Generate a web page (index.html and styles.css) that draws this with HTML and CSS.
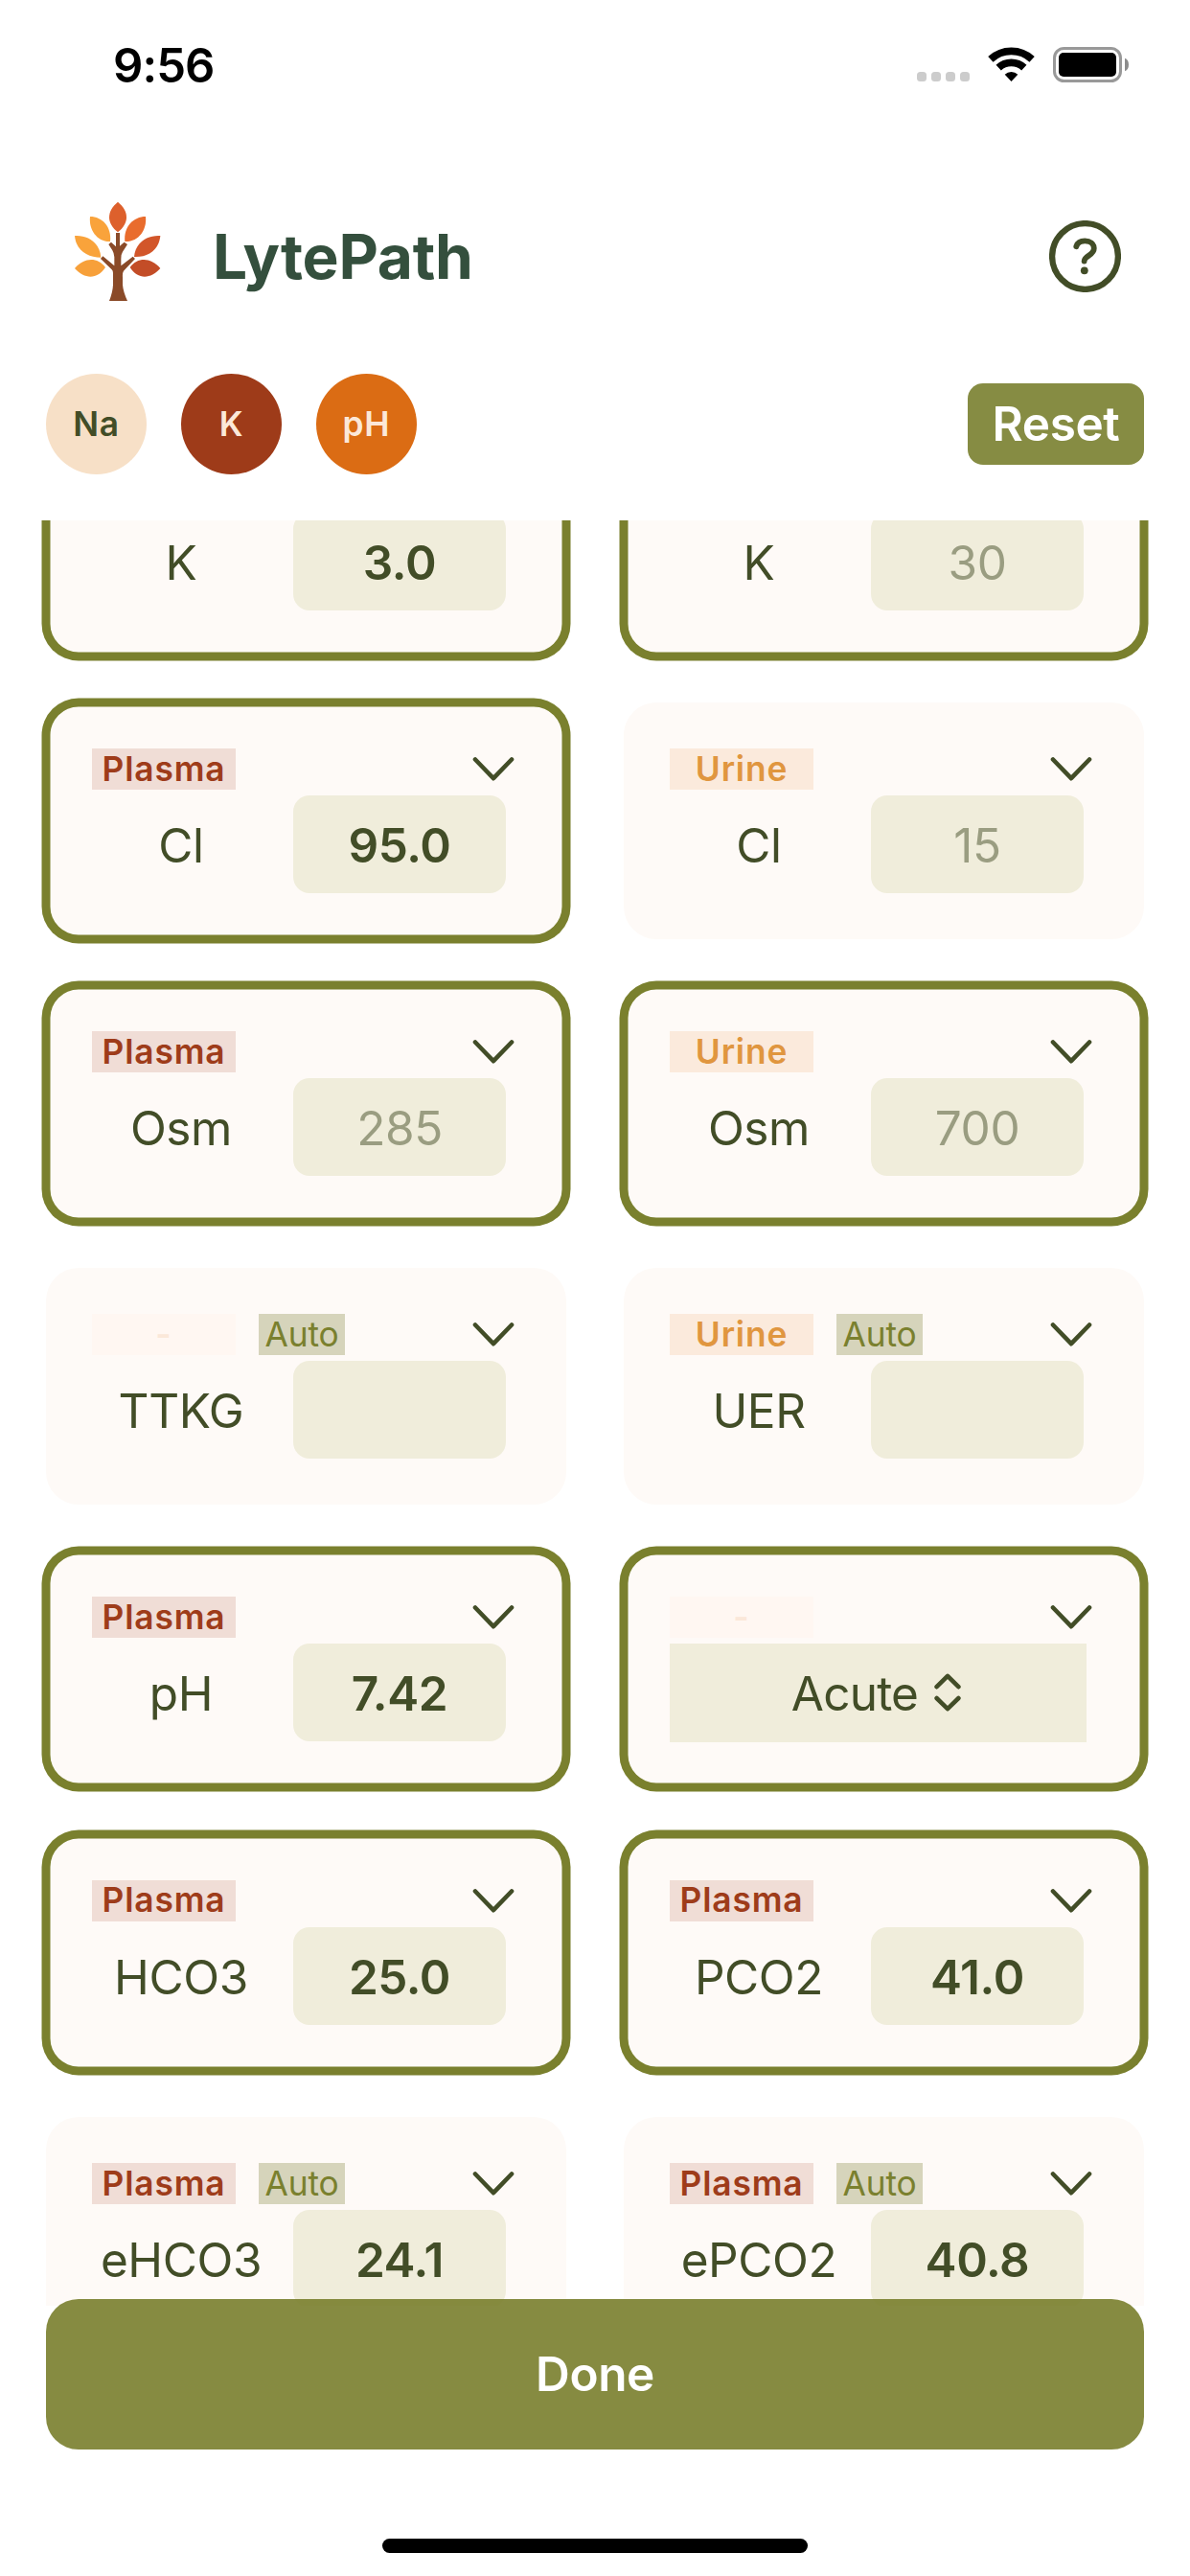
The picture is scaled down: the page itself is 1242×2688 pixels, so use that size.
FILE: index.html
```html
<!DOCTYPE html>
<html lang="en">
<head>
<meta charset="utf-8">
<title>LytePath</title>
<link rel="stylesheet" href="styles.css">
</head>
<body>
<svg class="defs" aria-hidden="true">
  <symbol id="chevron" viewBox="0 0 44 27"><path d="M3 3.5 22 23.2 41 3.5"/></symbol>
</svg>
<div class="screen">
  <div class="status">
    <span class="time">9:56</span>
    <div class="dots"><i></i><i></i><i></i><i></i></div>
    <svg class="wifi" viewBox="0 0 49 38">
      <path class="arc" d="M2.9 13.8A31.7 31.7 0 0 1 46.1 13.8M11.2 22.7A19.5 19.5 0 0 1 37.8 22.7"/>
      <path d="M24.5 37 17.7 29.7A10 10 0 0 1 31.3 29.7Z"/>
    </svg>
    <svg class="battery" viewBox="0 0 80 37">
      <rect class="shell" x="1.5" y="1.5" width="69" height="34" rx="10"/>
      <rect x="6" y="6" width="60" height="25" rx="5"/>
      <path class="nub" d="M75 11.7Q79 13.5 79 18.5T75 25.3Z"/>
    </svg>
  </div>

  <header class="header">
    <svg class="logo" viewBox="0 0 390 420">
      <path fill="#dd602c" d="M189 62C225 92 225 128 189 157C153 128 153 92 189 62Z"/>
      <path fill="#f9a33b" d="M102 108C140 108 170 140 165 186C125 188 97 150 102 108Z"/>
      <path fill="#e96c2d" d="M276 108C238 108 206 140 211 186C253 188 281 150 276 108Z"/>
      <path fill="#f9a33b" d="M54 168C95 165 133 190 136 236C95 236 58 215 54 168Z"/>
      <path fill="#d2562a" d="M322 168C281 165 243 190 240 234C283 236 318 213 322 168Z"/>
      <path fill="#f7a03a" d="M54 270C85 235 125 235 150 267C125 305 85 305 54 270Z"/>
      <path fill="#c34d27" d="M322 270C291 235 251 235 227 267C251 305 291 305 322 270Z"/>
      <path fill="#8a4a28" d="M183 159H195V200L209 188L219 195L204 218Q199 225 199 240V262L236 233L243 240L207 278Q203 284 204 298V322Q206 345 219 372H162Q173 345 174 322V285Q174 278 170 274L135 240L142 232L178 262V235Q177 222 172 214L160 195L168 188L183 202Z"/>
    </svg>
    <h1 class="title">LytePath</h1>
    <svg class="help" viewBox="10 10 75 75">
      <circle class="ring" cx="47.5" cy="47.5" r="34.4"/>
      <path class="hook" d="M38.3 37.3C39.3 33.2 42.8 31.3 47.3 31.3C52.8 31.3 56.8 34.4 56.8 39C56.8 42.5 54.8 44.4 51.6 46.5C48.2 48.7 46.6 50 46.6 52.6"/>
      <circle class="dot" cx="46.8" cy="62.3" r="3.9"/>
    </svg>
  </header>

  <div class="toolbar">
    <span class="pill pill-na">Na</span>
    <span class="pill pill-k">K</span>
    <span class="pill pill-ph">pH</span>
    <button class="reset">Reset</button>
  </div>

  <main class="scroller">
    <div class="grid">
      <section class="card active">
        <div class="head"></div>
        <div class="body"><span class="label">K</span><span class="field">3.0</span></div>
      </section>
      <section class="card active">
        <div class="head"></div>
        <div class="body"><span class="label">K</span><span class="field hint">30</span></div>
      </section>

      <section class="card active">
        <div class="head"><span class="tag plasma">Plasma</span><svg class="chev"><use href="#chevron"/></svg></div>
        <div class="body"><span class="label">Cl</span><span class="field">95.0</span></div>
      </section>
      <section class="card">
        <div class="head"><span class="tag urine">Urine</span><svg class="chev"><use href="#chevron"/></svg></div>
        <div class="body"><span class="label">Cl</span><span class="field hint">15</span></div>
      </section>

      <section class="card active">
        <div class="head"><span class="tag plasma">Plasma</span><svg class="chev"><use href="#chevron"/></svg></div>
        <div class="body"><span class="label">Osm</span><span class="field hint">285</span></div>
      </section>
      <section class="card active">
        <div class="head"><span class="tag urine">Urine</span><svg class="chev"><use href="#chevron"/></svg></div>
        <div class="body"><span class="label">Osm</span><span class="field hint">700</span></div>
      </section>

      <section class="card">
        <div class="head"><span class="tag none">-</span><span class="auto">Auto</span><svg class="chev"><use href="#chevron"/></svg></div>
        <div class="body"><span class="label">TTKG</span><span class="field"></span></div>
      </section>
      <section class="card">
        <div class="head"><span class="tag urine">Urine</span><span class="auto">Auto</span><svg class="chev"><use href="#chevron"/></svg></div>
        <div class="body"><span class="label">UER</span><span class="field"></span></div>
      </section>

      <section class="card active">
        <div class="head"><span class="tag plasma">Plasma</span><svg class="chev"><use href="#chevron"/></svg></div>
        <div class="body"><span class="label">pH</span><span class="field">7.42</span></div>
      </section>
      <section class="card active">
        <div class="head"><span class="tag none">-</span><svg class="chev"><use href="#chevron"/></svg></div>
        <div class="menu"><span>Acute</span><svg class="updown" viewBox="14 11 28 40"><path d="M16.6 25.2 28 13.9 39.4 25.2M16.6 37 28 48.2 39.4 37"/></svg></div>
      </section>

      <section class="card active">
        <div class="head"><span class="tag plasma">Plasma</span><svg class="chev"><use href="#chevron"/></svg></div>
        <div class="body"><span class="label">HCO3</span><span class="field">25.0</span></div>
      </section>
      <section class="card active">
        <div class="head"><span class="tag plasma">Plasma</span><svg class="chev"><use href="#chevron"/></svg></div>
        <div class="body"><span class="label">PCO2</span><span class="field">41.0</span></div>
      </section>

      <section class="card">
        <div class="head"><span class="tag plasma">Plasma</span><span class="auto">Auto</span><svg class="chev"><use href="#chevron"/></svg></div>
        <div class="body"><span class="label">eHCO3</span><span class="field">24.1</span></div>
      </section>
      <section class="card">
        <div class="head"><span class="tag plasma">Plasma</span><span class="auto">Auto</span><svg class="chev"><use href="#chevron"/></svg></div>
        <div class="body"><span class="label">ePCO2</span><span class="field">40.8</span></div>
      </section>
    </div>
  </main>

  <button class="done">Done</button>
  <div class="home"></div>
</div>
</body>
</html>
```
FILE: styles.css
```css
* { box-sizing: border-box; }

body {
  margin: 0;
  background: #fff;
  color: #424d27;
  font-family: Inter, "Liberation Sans", sans-serif;
  font-size: 49.5px;
  letter-spacing: -0.4px;
  line-height: 1;
}

button {
  border: 0;
  padding: 0;
  font: inherit;
  letter-spacing: inherit;
}

.defs { display: none; }

.screen {
  width: 1242px;
  height: 2688px;
  overflow: hidden;
  display: flex;
  flex-direction: column;
}

/* status bar */
.status {
  flex: none;
  height: 190px;
  padding: 49px 63px 0 118px;
  display: flex;
  align-items: flex-start;
}
.time {
  height: 37px;
  line-height: 39px;
  margin-right: auto;
  font-size: 49px;
  font-weight: 600;
  letter-spacing: -0.9px;
  color: #000;
}
.dots { display: flex; gap: 5px; margin: 26px 19px 0 0; }
.dots i { width: 10px; height: 10px; border-radius: 3.5px; background: #ccc; }
.wifi { width: 49px; height: 38px; margin: -1px 19px 0 0; }
.wifi .arc { fill: none; stroke: #000; stroke-width: 7.8; }
.battery { width: 80px; height: 37px; }
.battery .shell { fill: none; stroke: #999; stroke-width: 3; }
.battery .nub { fill: #8c8c8c; }

/* app header */
.header {
  flex: none;
  height: 155px;
  padding: 0 72px 0 60px;
  display: flex;
  align-items: center;
}
.logo { width: 130px; height: 140px; align-self: flex-start; }
.title {
  margin: 0 auto 0 32px;
  font-size: 64px;
  font-weight: 700;
  letter-spacing: -0.25px;
  color: #344f3d;
}
.help { width: 75px; height: 75px; }
.help .ring { fill: none; stroke: #424d27; stroke-width: 6.3; }
.help .hook { fill: none; stroke: #424d27; stroke-width: 5.8; stroke-linecap: round; }
.help .dot { fill: #424d27; }

/* filter pills and reset */
.toolbar {
  flex: none;
  margin: 45px 48px 48px;
  display: flex;
  align-items: center;
  gap: 36px;
}
.pill {
  width: 105px;
  height: 105px;
  border-radius: 50%;
  display: grid;
  place-items: center;
  font-size: 35.3px;
  font-weight: 600;
  letter-spacing: 0.8px;
}
.pill-na { background: #f7e0c7; }
.pill-k { background: #9e3b19; color: #fce8d8; }
.pill-ph { background: #db6c14; color: #fce8d8; }
.reset {
  width: 184px;
  height: 85px;
  margin-left: auto;
  border-radius: 16px;
  background: #868c43;
  color: #fff;
  font-weight: 600;
}

/* lab value cards */
.scroller {
  flex: none;
  height: 1863px;
  padding: 0 48px;
  overflow: hidden;
}
.grid {
  margin-top: -105.4px;
  display: grid;
  grid-template-columns: 543px 543px;
  gap: 48.2px 60px;
}
.card {
  position: relative;
  height: 247px;
  padding: 48px;
  display: flex;
  flex-direction: column;
  gap: 6px;
  border-radius: 34px;
  background: #fefaf7;
}
/* the outline straddles the card edge */
.card.active {
  box-shadow: 0 0 0 4.5px #7a802e, inset 0 0 0 4.5px #7a802e;
}
.card.active::after {
  content: "";
  position: absolute;
  inset: -2px;
  border: 4px solid #7a802e;
  border-radius: 36px;
}
.head {
  flex: none;
  height: 43px;
  display: flex;
  align-items: center;
  gap: 24px;
}
.tag, .auto {
  height: 43px;
  display: grid;
  place-items: center;
  font-size: 35.3px;
}
.tag { width: 150px; font-weight: 600; letter-spacing: 0.85px; }
.auto { width: 90px; background: #d6d4bb; color: #7a802e; letter-spacing: -0.2px; }
.plasma { background: #f0ddd6; color: #9e3c1a; }
.urine { background: #fbeadc; color: #e0963f; }
.none { background: #fff7f2; color: #fbe8d9; }
.chev {
  width: 44px;
  height: 27px;
  margin: 0 6px 0 auto;
  fill: none;
  stroke: #424d27;
  stroke-width: 4.6;
  stroke-linecap: round;
  stroke-linejoin: round;
}
.body { display: flex; gap: 24px; }
.label { width: 186px; height: 102px; line-height: 105px; text-align: center; }
.field {
  width: 222px;
  height: 102px;
  line-height: 105px;
  border-radius: 17px;
  background: #f0eddb;
  text-align: center;
  font-weight: 600;
}
.field.hint { font-weight: 400; color: #9a9d81; }
.menu {
  flex: none;
  width: 435px;
  height: 103px;
  padding: 1px 4px 0 0;
  display: flex;
  align-items: center;
  justify-content: center;
  gap: 17px;
  background: #f0eddb;
  letter-spacing: -0.8px;
}
.updown {
  width: 28px;
  height: 40px;
  margin-top: -3px;
  fill: none;
  stroke: #424d27;
  stroke-width: 4.6;
  stroke-linecap: round;
  stroke-linejoin: round;
}

/* bottom action, slightly translucent over the list */
.done {
  flex: none;
  position: relative;
  width: 1146px;
  height: 157px;
  padding-top: 1px;
  margin: -7px auto 0;
  border-radius: 34px;
  background: rgba(122, 128, 46, 0.91);
  color: #fff;
  font-weight: 600;
}
.home {
  flex: none;
  width: 444px;
  height: 15px;
  margin: 93px auto 0;
  border-radius: 8px;
  background: #000;
}
```
